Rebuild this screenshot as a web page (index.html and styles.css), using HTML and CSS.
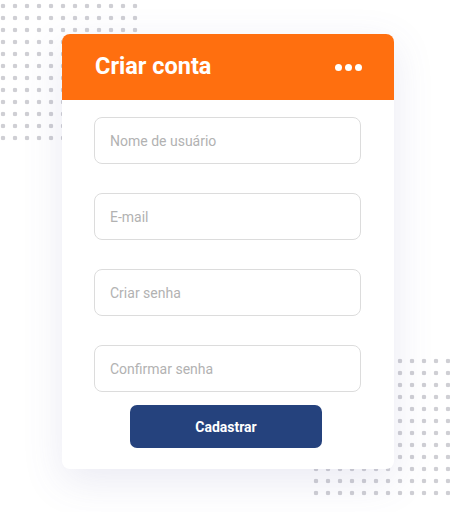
FILE: index.html
```html
<!DOCTYPE html>
<html lang="pt-BR">
<head>
    <meta charset="UTF-8">
    <meta name="viewport" content="width=device-width, initial-scale=1.0">
    <title>Criar conta</title>
    <link rel="stylesheet" href="styles.css">
</head>
<body>
    <div class="dots dots-top"></div>
    <div class="dots dots-bottom"></div>

    <div class="card">
        <div class="card-header">
            <h1 class="card-title">Criar conta</h1>
            <span class="more">
                <i></i><i></i><i></i>
            </span>
        </div>
        <form class="card-form">
            <input class="field" type="text" placeholder="Nome de usuário">
            <input class="field" type="email" placeholder="E-mail">
            <input class="field" type="password" placeholder="Criar senha">
            <input class="field" type="password" placeholder="Confirmar senha">
            <button class="btn" type="button">Cadastrar</button>
        </form>
    </div>
</body>
</html>
```

FILE: styles.css
```css
body {
    margin: 0;
    padding: 34px 0 0 62px;
    background-color: #fff;
    font-family: Roboto, "Noto Sans", sans-serif;
    position: relative;
    height: 512px;
    box-sizing: border-box;
    overflow: hidden;
}
.dots {
    position: absolute;
    width: 144px;
    height: 144px;
    background-image: radial-gradient(circle, #cfcfd4 2px, transparent 2.6px);
    background-size: 12px 12px;
    z-index: 0;
}
.dots-top {
    left: -3px;
    top: 0;
}
.dots-bottom {
    left: 310px;
    top: 355px;
}
.card {
    position: relative;
    z-index: 1;
    width: 332px;
    background-color: #fff;
    border-radius: 8px;
    overflow: hidden;
    box-shadow: 0 12px 40px rgba(90, 90, 160, 0.13);
}
.card-header {
    height: 66px;
    background-color: #ff6f0f;
    display: flex;
    align-items: center;
    justify-content: space-between;
    padding: 0 32px 0 33px;
}
.card-title {
    margin: 0;
    color: #fff;
    font-size: 23.5px;
    font-weight: 700;
    line-height: 1;
}
.more {
    display: flex;
    gap: 3px;
    margin-top: 1px;
}
.more i {
    width: 7px;
    height: 7px;
    border-radius: 50%;
    background-color: #fff;
}
.card-form {
    display: flex;
    flex-direction: column;
    gap: 29px;
    padding: 17px 33px 21px 32px;
}
.field {
    height: 47px;
    box-sizing: border-box;
    border: 1px solid #dcdcdc;
    border-radius: 8px;
    padding: 0 15px;
    font-family: Roboto, "Noto Sans", sans-serif;
    font-size: 14px;
    color: #333;
    outline: none;
}
.field::placeholder {
    color: #b2b2b2;
}
.btn {
    align-self: center;
    width: 192px;
    height: 43px;
    margin: -16px 3px 0 0;
    border: none;
    border-radius: 7px;
    background-color: #25427d;
    color: #fff;
    font-family: Roboto, "Noto Sans", sans-serif;
    font-size: 14px;
    font-weight: 700;
}
```
